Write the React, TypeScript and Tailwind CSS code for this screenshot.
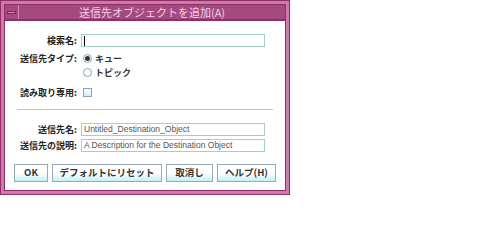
const jp = { fontFamily: '"Noto Sans CJK JP", "Noto Sans", sans-serif' }
const latin = { fontFamily: '"Liberation Sans", Arial, sans-serif' }

function Label({ children }: { children: React.ReactNode }) {
  return (
    <div className="w-[72px] shrink-0 text-right text-[9px] font-bold leading-none text-[#222]" style={jp}>
      {children}
    </div>
  )
}

function Field({ value, cursor }: { value?: string; cursor?: boolean }) {
  return (
    <div className="ml-[4px] flex h-[13px] w-[184px] items-center border border-[#a6cfc4] bg-white px-[2px] text-[8.5px] leading-none text-[#555]" style={latin}>
      {cursor && <span className="h-[10px] w-px bg-black" />}
      {value}
    </div>
  )
}

function Btn({ children, w }: { children: React.ReactNode; w: string }) {
  return (
    <button
      className={`flex h-[18px] ${w} items-center justify-center border border-[#98a8b8] bg-gradient-to-b from-white via-white to-[#c6eff5] text-[9.5px] font-bold leading-none text-[#333]`}
      style={jp}
    >
      {children}
    </button>
  )
}

export default function App() {
  return (
    <div className="h-[203px] w-[484px] bg-white">
      <div className="flex h-[195px] w-[290px] flex-col border border-[#8e2f66] bg-[#d077ab] p-[3px]">
        <div className="flex h-[16px] shrink-0 border border-[#8e2f66] bg-[#a54a80]">
          <div className="flex w-[14px] items-center justify-center border-r border-[#d08ab2]">
            <span className="h-[3px] w-[9px] border border-[#7a2455] bg-[#d68bb6]" />
          </div>
          <div className="flex flex-1 items-center justify-center text-[11px] leading-none text-[#f6cfe6]" style={jp}>
            送信先オブジェクトを追加(A)
          </div>
        </div>
        <div className="flex flex-1 flex-col border border-[#8e2f66] bg-white pt-[13px]">
          <div className="flex items-center">
            <Label>検索名:</Label>
            <Field cursor />
          </div>
          <div className="mt-[5px] flex h-[12px] items-center">
            <Label>送信先タイプ:</Label>
            <span className="ml-[6px] flex h-[9px] w-[9px] items-center justify-center rounded-full border border-[#8aa0b4] bg-white">
              <span className="h-[5px] w-[5px] rounded-full bg-[#333]" />
            </span>
            <span className="ml-[3px] text-[9px] font-bold leading-none text-[#333]" style={jp}>キュー</span>
          </div>
          <div className="mt-[2px] flex h-[12px] items-center pl-[78px]">
            <span className="h-[9px] w-[9px] rounded-full border border-[#8aa0b4] bg-white" />
            <span className="ml-[3px] text-[9px] font-bold leading-none text-[#333]" style={jp}>トピック</span>
          </div>
          <div className="mt-[8px] flex h-[12px] items-center">
            <Label>読み取り専用:</Label>
            <span className="ml-[6px] h-[9px] w-[9px] border border-[#8aa0b4] bg-gradient-to-b from-white to-[#d2eef4]" />
          </div>
          <div className="mx-[12px] mt-[11px] h-px bg-[#9fd0e0]" />
          <div className="mt-[13px] flex items-center">
            <Label>送信先名:</Label>
            <Field value="Untitled_Destination_Object" />
          </div>
          <div className="mt-[3px] flex items-center">
            <Label>送信先の説明:</Label>
            <Field value="A Description for the Destination Object" />
          </div>
          <div className="mt-[12px] flex gap-[4px] pl-[9px]">
            <Btn w="w-[34px]">OK</Btn>
            <Btn w="w-[110px]">デフォルトにリセット</Btn>
            <Btn w="w-[47px]">取消し</Btn>
            <Btn w="w-[59px]">ヘルプ(H)</Btn>
          </div>
        </div>
      </div>
    </div>
  )
}
